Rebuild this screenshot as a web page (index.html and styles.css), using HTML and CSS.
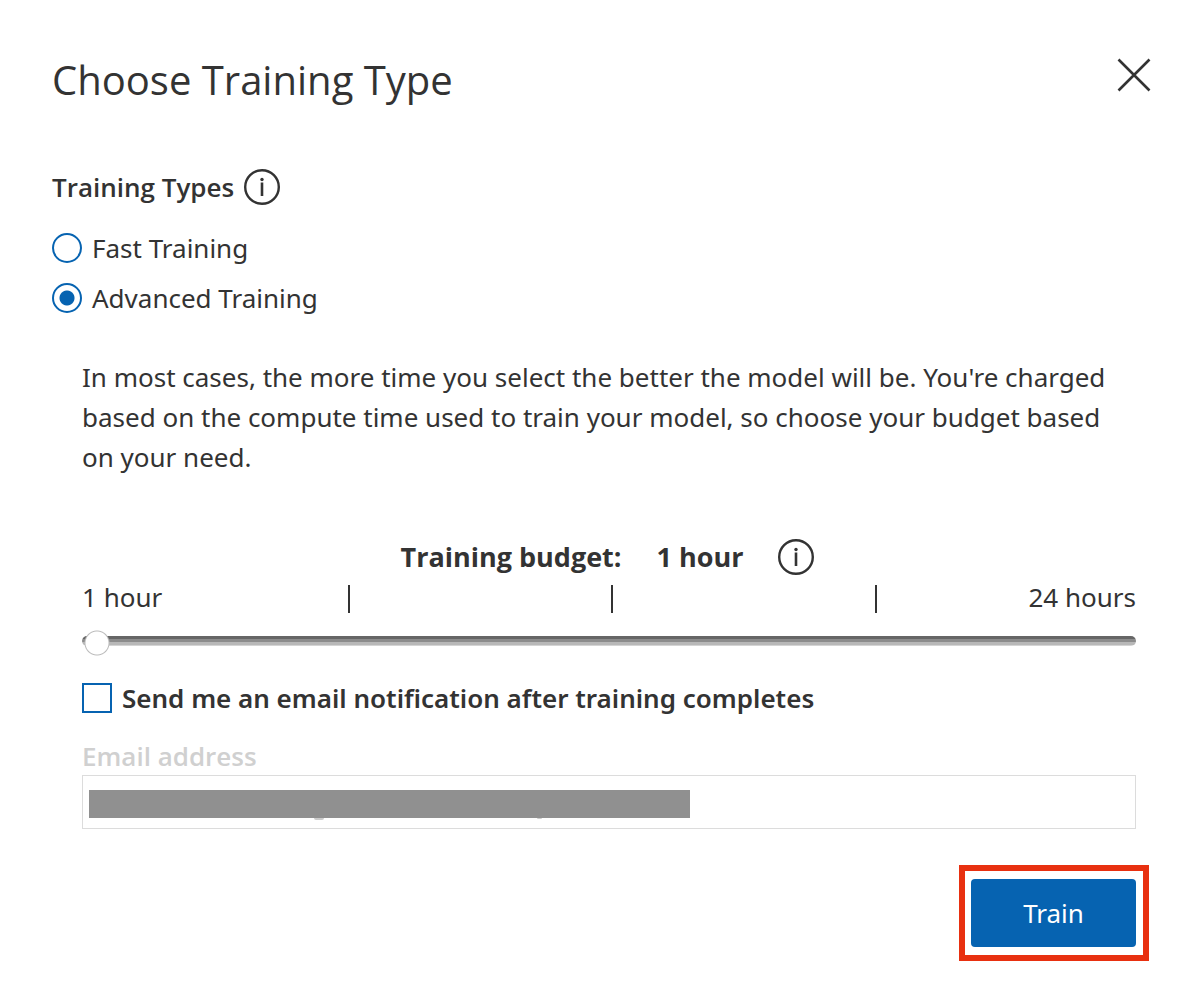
FILE: index.html
```html
<!DOCTYPE html>
<html lang="en">
<head>
<meta charset="utf-8">
<meta name="viewport" content="width=device-width, initial-scale=1">
<title>Choose Training Type</title>
<link rel="stylesheet" href="styles.css">
</head>
<body>
<main class="dialog">
  <header class="dialog-header">
    <h1 class="title">Choose Training Type</h1>
    <button class="icon-button close" type="button" aria-label="Close">
      <svg width="34" height="34" viewBox="0 0 34 34" fill="none" stroke="currentColor" stroke-width="2.6"><path d="M1.5 1.5 32.5 32.5M32.5 1.5 1.5 32.5"/></svg>
    </button>
  </header>

  <form class="form">
    <fieldset class="types">
      <legend class="types-legend">
        <span>Training Types</span>
        <button class="icon-button" type="button" aria-label="About training types">
          <svg width="36" height="36" viewBox="0 0 36 36" fill="none" stroke="currentColor"><circle cx="18" cy="18" r="16.8" stroke-width="2.4"/><path d="M18 13.5V27" stroke-width="2.6"/><circle cx="18" cy="10.5" r="1.7" fill="currentColor" stroke="none"/></svg>
        </button>
      </legend>
      <label class="choice"><input class="radio" type="radio" name="type"><span>Fast Training</span></label>
      <label class="choice"><input class="radio" type="radio" name="type" checked><span>Advanced Training</span></label>
    </fieldset>

    <section class="advanced">
      <p class="description">In most cases, the more time you select the better the model will be. You're charged based on the compute time used to train your model, so choose your budget based on your need.</p>

      <div class="budget">
        <label for="budget">Training budget:</label>
        <output for="budget">1 hour</output>
        <button class="icon-button" type="button" aria-label="About training budget">
          <svg width="36" height="36" viewBox="0 0 36 36" fill="none" stroke="currentColor"><circle cx="18" cy="18" r="16.8" stroke-width="2.4"/><path d="M18 13.5V27" stroke-width="2.6"/><circle cx="18" cy="10.5" r="1.7" fill="currentColor" stroke="none"/></svg>
        </button>
      </div>
      <div class="scale">
        <span>1 hour</span>
        <span class="tick"></span>
        <span class="tick"></span>
        <span class="tick"></span>
        <span class="scale-end">24 hours</span>
      </div>
      <input class="slider" id="budget" type="range" min="1" max="24" value="1">

      <label class="choice notify"><input class="checkbox" type="checkbox"><span>Send me an email notification after training completes</span></label>

      <label class="email-label" for="email">Email address</label>
      <div class="email-field">
        <input class="email" id="email" type="email" disabled>
        <span class="redaction"></span>
      </div>
    </section>

    <footer class="actions">
      <div class="highlight"><button class="train" type="submit">Train</button></div>
    </footer>
  </form>
</main>
</body>
</html>
```
FILE: styles.css
```css
* { box-sizing: border-box; }

body {
  margin: 0;
  background: #fff;
  color: #333;
  font: 26px/40px "Noto Sans", "Open Sans", sans-serif;
}

.dialog { padding: 48px 52px 20px; }

.dialog-header {
  display: flex;
  justify-content: space-between;
  align-items: flex-start;
  margin-right: -15px;
}

.title {
  margin: 0;
  font-family: "Open Sans", sans-serif;
  font-size: 40px;
  font-weight: 400;
  line-height: 64px;
}

.icon-button {
  display: flex;
  padding: 0;
  border: 0;
  background: none;
  color: inherit;
}

.close { padding-top: 10px; }

.types {
  display: flex;
  flex-direction: column;
  gap: 10px;
  margin: 55px 0 0;
  padding: 0;
  border: 0;
}

.types-legend {
  display: flex;
  align-items: center;
  gap: 10px;
  margin-bottom: 21px;
  padding: 0;
  font-family: "Open Sans", sans-serif;
  font-weight: 600;
}

.choice {
  display: flex;
  align-items: center;
  gap: 10px;
}

.radio,
.checkbox {
  appearance: none;
  flex: none;
  width: 30px;
  height: 30px;
  margin: 0;
  border: 2px solid #0663b1;
  background: #fff;
}

.radio { border-radius: 50%; }

.radio:checked { background: radial-gradient(circle, #0663b1 7px, transparent 8px); }

.advanced {
  display: flex;
  flex-direction: column;
  padding: 39px 0 0 30px;
}

.description {
  margin: 0 0 60px;
  padding-right: 10px;
}

.budget {
  display: flex;
  justify-content: center;
  align-items: center;
  gap: 35px;
  padding-right: 3px;
  font-family: "Open Sans", sans-serif;
  font-size: 27px;
  font-weight: 700;
}

.scale {
  display: grid;
  grid-template-columns: repeat(4, 1fr);
  grid-auto-flow: column;
  align-items: center;
}

.scale > span { grid-row: 1; }

.tick {
  width: 2px;
  height: 28px;
  margin-top: 4px;
  margin-left: 2px;
  background: #333;
}

.scale > .tick:nth-child(2) { grid-column: 2; }
.scale > .tick:nth-child(3) { grid-column: 3; }
.scale > .tick:nth-child(4) { grid-column: 4; }

.scale > .scale-end {
  grid-column: 4;
  justify-self: end;
}

.slider {
  appearance: none;
  width: 100%;
  height: 26px;
  margin: 11px 0 24px;
  background: none;
}

.slider::-webkit-slider-runnable-track {
  height: 10px;
  border-radius: 5px;
  background: linear-gradient(#666 3px, #8c8c8c 3px 6px, #b8b8b8 6px 9px, #d4d4d4 9px);
}

.slider::-webkit-slider-thumb {
  appearance: none;
  width: 30px;
  height: 26px;
  margin-top: -6px;
  background: radial-gradient(circle, #fff 11px, #bbb 12px, transparent 13px);
}

.notify { font-weight: 600; }

.email-label {
  margin-top: 20px;
  color: #d0d0d0;
  font-family: "Open Sans", sans-serif;
  font-weight: 600;
  line-height: 37px;
}

.email-field {
  position: relative;
  display: flex;
}

.email {
  width: 100%;
  height: 54px;
  padding: 0 16px;
  border: 1px solid #dcdcdc;
  background: #fff;
  font: inherit;
}

.redaction {
  position: absolute;
  top: 15px;
  left: 7px;
  width: 57%;
  height: 28px;
  background: #909090;
}

.redaction::before,
.redaction::after {
  content: "";
  position: absolute;
  top: 28px;
  left: 225px;
  width: 10px;
  height: 2px;
  border-radius: 0 0 5px 5px;
  background: #ccc;
}

.redaction::after {
  left: 448px;
  width: 5px;
  height: 1px;
}

.actions {
  display: flex;
  justify-content: flex-end;
  margin: 36px -13px 0 0;
}

.highlight {
  padding: 8px 7px 8px 6px;
  border: 6px solid #e83010;
}

.train {
  display: block;
  min-width: 165px;
  padding: 14px 24px;
  border: 0;
  border-radius: 4px;
  background: #0663b1;
  color: #fff;
  font: inherit;
}
```
